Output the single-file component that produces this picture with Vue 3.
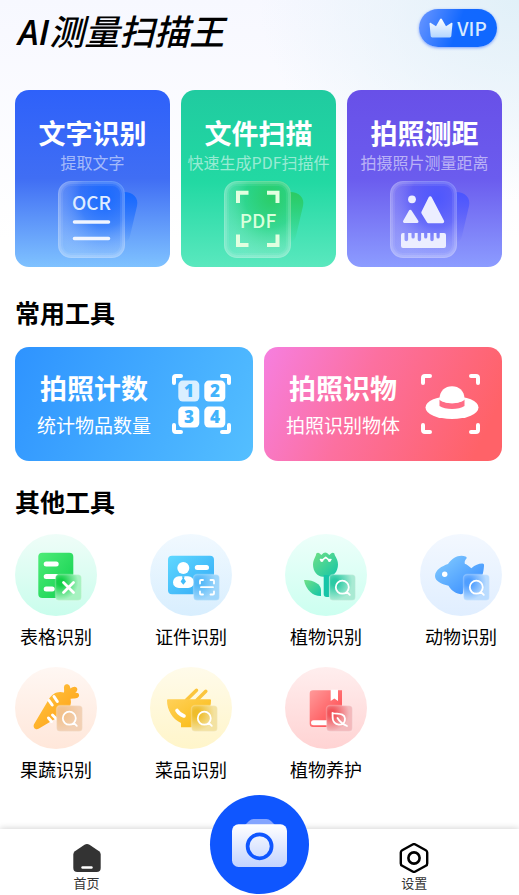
<template>
  <div class="page">
    <header class="header">
      <h1 class="logo"><span class="logo-en">AI</span>测量扫描王</h1>
      <button class="vip" type="button">
        <svg width="24" height="20" viewBox="0 0 24 20" aria-hidden="true">
          <defs>
            <linearGradient id="crown" x1="0" y1="0" x2="0" y2="1">
              <stop offset="0" stop-color="#ffffff" />
              <stop offset="1" stop-color="#b4d6ff" />
            </linearGradient>
          </defs>
          <path
            d="M.5 5.600c0-.8.8-1.100 1.400-.6L7 8.300 11 1.200c.5-.8 1.500-.8 2 0L17 8.300l5.100-3.300c.7-.5 1.400-.2 1.400.6l-1.200 12.400c-.1.9-.7 1.400-1.500 1.400H3.200c-.8 0-1.400-.5-1.500-1.400z"
            fill="url(#crown)"
          />
        </svg>
        <span class="vip-text">VIP</span>
      </button>
    </header>

    <main class="content">
      <!-- 主功能 -->
      <div class="features">
        <button
          v-for="item in features"
          :key="item.id"
          type="button"
          class="feature"
          :class="item.id"
        >
          <span class="card-title">{{ item.title }}</span>
          <span class="feature-desc">{{ item.desc }}</span>
          <svg class="feature-icon" width="94" height="77" viewBox="0 0 94 77" aria-hidden="true">
            <defs>
              <linearGradient :id="item.id + '-back'" x1="0" y1="0" x2="0" y2="1">
                <stop offset="0" :stop-color="item.back" />
                <stop offset="1" :stop-color="item.back" stop-opacity="0" />
              </linearGradient>
              <radialGradient :id="item.id + '-glass'" cx="0.7" cy="0.22" r="0.85">
                <stop offset="0" :stop-color="item.back" stop-opacity="0.9" />
                <stop offset="0.45" :stop-color="item.back" stop-opacity="0.4" />
                <stop offset="1" stop-color="#fff" stop-opacity="0.14" />
              </radialGradient>
            </defs>
            <path
              d="M78 11c9 0 15 6 13 14l-7 30c-1 4-3 6-6 7z"
              :fill="`url(#${item.id}-back)`"
            />
            <rect x="12" y="0" width="67" height="77" rx="13" :fill="`url(#${item.id}-glass)`" />
            <g fill="none" stroke="#fff">
              <rect x="12.500" y="0.500" width="66" height="76" rx="12.500" stroke-opacity="0.12" />
              <rect x="13.500" y="1.500" width="64" height="74" rx="11.500" stroke-opacity="0.12" stroke-width="3" />
              <rect x="14.500" y="2.500" width="62" height="72" rx="10.500" stroke-opacity="0.08" stroke-width="5" />
            </g>

            <g v-if="item.id === 'ocr'">
              <text class="glyph" x="45.500" y="29" fill="#deebff">OCR</text>
              <path d="M28.500 41h34M28.500 57.500h34" stroke="#f0f5ff" stroke-width="3.600" stroke-linecap="round" />
            </g>
            <g v-else-if="item.id === 'pdf'">
              <text class="glyph" x="46" y="47" fill="#d9ffdc">PDF</text>
              <path
                d="M26 22V11.800h10.500M55 11.800h10.500V22M26 53.500V64h10.500M55 64h10.500V53.500"
                fill="none"
                stroke="#e2ffe0"
                stroke-width="4"
              />
            </g>
            <g v-else fill="#eceeff" stroke="#eceeff" stroke-linejoin="round">
              <circle cx="34" cy="18.300" r="3.900" stroke="none" />
              <path d="M32.300 30.300 26.500 40.500H39z" stroke-width="3" />
              <path d="M52.200 17 45 31.500l5.500 9H64.500z" stroke-width="3.400" />
              <path
                d="M25 52h1.500v6.500a1.800 1.800 0 0 0 3.600 0V52h3.400v4a1.600 1.600 0 0 0 3.200 0v-4h3v6.500a1.700 1.700 0 0 0 3.400 0V52h3v4a1.600 1.600 0 0 0 3.200 0v-4h3v6.500a1.700 1.700 0 0 0 3.400 0V52h2.800v4a1.600 1.600 0 0 0 3.200 0v-4H66q2 0 2 2v11q0 2-2 2H25q-2 0-2-2V54q0-2 2-2z"
                stroke="none"
              />
            </g>
          </svg>
        </button>
      </div>

      <section class="common">
        <h2>常用工具</h2>
        <div class="common-list">
          <button type="button" class="common-card count">
            <span class="common-text">
              <span class="card-title">拍照计数</span>
              <span class="common-desc">统计物品数量</span>
            </span>
            <svg width="60" height="60" viewBox="0 0 60 60" aria-hidden="true">
              <path :d="corners" class="corner" />
              <g fill="#fff">
                <rect x="6.300" y="6.600" width="21" height="21" rx="4.500" opacity="0.8" />
                <rect x="32.300" y="6.600" width="21" height="21" rx="4.500" />
                <rect x="6.300" y="32.600" width="21" height="21" rx="4.500" />
                <rect x="32.300" y="32.600" width="21" height="21" rx="4.500" />
              </g>
              <g class="digit">
                <text x="17" y="23">1</text>
                <text x="43" y="23">2</text>
                <text x="17" y="49">3</text>
                <text x="43" y="49">4</text>
              </g>
            </svg>
          </button>
          <button type="button" class="common-card object">
            <span class="common-text">
              <span class="card-title">拍照识物</span>
              <span class="common-desc">拍照识别物体</span>
            </span>
            <svg width="60" height="60" viewBox="0 0 60 60" aria-hidden="true">
              <path :d="corners" class="corner" />
              <ellipse cx="31" cy="33.500" rx="26.500" ry="11.500" fill="#fff" />
              <path d="M18.500 25.500C23 30.500 39 30.500 43.500 25.500V32C38 36 24 36 18.500 32z" fill="#ff6d86" />
              <path d="M18.500 25C18.500 17 24 12.300 31 12.300S43.500 17 43.500 25C40 30.500 22 30.500 18.500 25z" fill="#fff" />
            </svg>
          </button>
        </div>
      </section>

      <section class="others">
        <h2>其他工具</h2>
        <div class="tools">
          <button v-for="tool in tools" :key="tool.id" type="button" class="tool">
            <svg width="82" height="82" viewBox="0 0 82 82" aria-hidden="true">
              <defs>
                <linearGradient :id="tool.id + '-bg'" x1="0" y1="0" x2="0" y2="1">
                  <stop offset="0" :stop-color="tool.bg[0]" />
                  <stop offset="1" :stop-color="tool.bg[1]" />
                </linearGradient>
                <linearGradient :id="tool.id + '-fg'" x1="0" y1="0" x2="1" y2="1">
                  <stop offset="0" :stop-color="tool.fg[0]" />
                  <stop offset="1" :stop-color="tool.fg[1]" />
                </linearGradient>
                <radialGradient :id="tool.id + '-badge'" cx="0.2" cy="0.3" r="0.85">
                  <stop offset="0.15" :stop-color="tool.badge[0]" />
                  <stop offset="0.8" :stop-color="tool.badge[1]" />
                </radialGradient>
              </defs>
              <circle cx="41" cy="41" r="41" :fill="`url(#${tool.id}-bg)`" />

              <g :fill="`url(#${tool.id}-fg)`">
                <g v-if="tool.id === 'table'">
                  <rect x="23.300" y="18.700" width="35" height="45.300" rx="4" />
                  <path d="M31.200 30h10M31.200 42.500h10M31.200 55h6" class="white" stroke-width="5" />
                </g>
                <g v-else-if="tool.id === 'card'">
                  <rect x="18" y="21.700" width="46" height="38.600" rx="4" />
                  <circle cx="33.300" cy="34" r="6" fill="#fff" />
                  <rect x="23" y="42.300" width="21" height="11.800" rx="5.900" fill="#fff" />
                  <path d="M32 42.300h2.600L34 44.500l2 3-2.700 3.300-2.700-3.300 2-3z" fill="#43bdf9" />
                  <path d="M47.300 33.500h9.200" class="white" stroke-width="5" />
                </g>
                <g v-else-if="tool.id === 'plant'">
                  <path d="M31 21c0-2 2-3 4-1.200l1.300 1.300 2.200-2q1.800-1.200 3.500 0l2.300 2 1.400-1.300c2-1.800 4-.8 4 1.200 2 3.500 3.300 6 3.300 9.500 0 7-4.500 12.200-10 12.200h-5c-5.500 0-10-5-10-12.200 0-3.500 1.500-6 3-9.500z" />
                  <path d="M38.700 41h5.600v22h-2.600c-2 0-3-1-3-3z" fill="#16c5a8" />
                  <path d="M19 46c9-.5 17 4 17 10v6c-8 .2-15-5.500-17-16z" />
                  <path d="m35.500 25.500 1.500.8 3.700-3 3.700 3 1.500-.8" class="white" stroke-width="1.600" />
                  <path d="M36.800 26.300h.1M44.400 26.300h.1" class="white" stroke-width="3.200" />
                </g>
                <g v-else-if="tool.id === 'animal'">
                  <path d="M15 42c0-6 7-10 13-12 4-6 11-10 17.500-7.600 1.500.5 1.500 1.600.5 2.700-1.200 1.500-1.500 3-1.200 4.700 2.500 1 4.700 2.700 6.500 4.400 4-3.200 7-4.500 11-4.600 1.600 0 1.900.9 1.700 2.300-.5 7-2 13-7 19L44 53l-1 6c-.5 1.200-1.500 1.400-3 1-6.500-1.500-9-4.500-11.500-8.300C21 50 15 47 15 42z" />
                  <circle cx="24.700" cy="40.300" r="2.700" fill="#fff" />
                </g>
                <g v-else-if="tool.id === 'fruit'">
                  <path d="M34 32c3-5.500 9-8.500 15-6.500.5-3-.5-4.500.2-6.500.8-2.400 4.500-2.400 5.500 0l.8 2.500c2-1.700 4.500-2.500 6-1 1.700 1.700.6 4-1.300 5.400 2.300-.3 3.900.5 3.900 2.400 0 2.300-2.800 3.400-5.500 3.200l-3 .3c1 4.700-.2 9-4 13.200L24 61.600c-3 2-6.500-.7-5-4.300z" />
                  <path d="m34 33.500 3.200 4.500M39 29.500l3.300 5M33.500 51l3 3.500M37.500 48l4 4" class="white" stroke-width="3" />
                </g>
                <g v-else-if="tool.id === 'dish'">
                  <path d="m36.500 33 10-9.700M47 33l8.800-8.700" stroke="#fbc53c" stroke-width="3.500" stroke-linecap="round" />
                  <path d="M18 32.300h42q1 0 1 1c0 9-4 17-11 22v5H31V56c-8.500-4-14-13-14-22.500q0-1.200 1-1.200z" />
                  <path d="M27 43.500q2.500 4 7 5.500" class="white" stroke-width="3.600" />
                </g>
                <g v-else>
                  <path d="M28 23.300h29V60H28q-3.300 0-3.300-3.300V26.600q0-3.300 3.300-3.300z" />
                  <path d="M57 53.300H28.500a2.500 2.500 0 0 0 0 5H57z" fill="#fff" />
                  <path d="M45.700 22.700H53V34l-3.700-2.600-3.600 2.600z" fill="#fff" />
                </g>
              </g>

              <rect
                :x="tool.pos[0]"
                :y="tool.pos[1]"
                width="26"
                height="26"
                rx="3.500"
                :fill="`url(#${tool.id}-badge)`"
                stroke="#fff"
                stroke-opacity="0.22"
                stroke-width="1.400"
              />
              <path
                :d="marks[tool.mark].d"
                :transform="`translate(${tool.pos[0]} ${tool.pos[1]})`"
                class="white"
                :stroke-width="marks[tool.mark].width"
              />
            </svg>
            <span class="tool-name">{{ tool.name }}</span>
          </button>
        </div>
      </section>
    </main>

    <!-- 底部导航 -->
    <nav class="tabbar">
      <a class="tab" href="#home">
        <svg width="30" height="30" viewBox="0 0 30 30" aria-hidden="true">
          <path
            d="M12.500 1.800q2.500-1.600 5 0l9.600 6.500q1.600 1.200 1.600 3.200V25q0 4-4 4H5.300q-4 0-4-4V11.500q0-2 1.600-3.200z"
            fill="#333"
          />
          <path d="M10.500 24.500h9" stroke="#fff" stroke-width="2.400" stroke-linecap="round" />
        </svg>
        <span>首页</span>
      </a>
      <button class="camera" type="button" aria-label="拍照">
        <svg width="55" height="48" viewBox="0 0 55 48" aria-hidden="true">
          <defs>
            <linearGradient id="camera-body" x1="0" y1="0" x2="0" y2="1">
              <stop offset="0" stop-color="#ffffff" />
              <stop offset="1" stop-color="#c2d3ff" />
            </linearGradient>
          </defs>
          <path d="m13 6 4-4q2-2 4.500-2h13Q37 0 39 2l4 4z" fill="#83a4ff" />
          <rect y="5.300" width="55" height="42.700" rx="6.500" fill="url(#camera-body)" />
          <circle cx="27.600" cy="27.300" r="12" fill="none" stroke="#0f56ff" stroke-width="3.700" />
        </svg>
      </button>
      <a class="tab" href="#settings">
        <svg width="30" height="30" viewBox="0 0 30 30" fill="none" stroke="#000" aria-hidden="true">
          <path
            d="M13.600 1.500q1.400-.8 2.800 0l10.400 5.700q1.400.8 1.400 2.400v10.800q0 1.600-1.400 2.400l-10.400 5.700q-1.400.8-2.800 0L3.200 22.800q-1.400-.8-1.400-2.400V9.600q0-1.600 1.400-2.400z"
            stroke-width="2.400"
          />
          <circle cx="15" cy="15" r="5.600" stroke-width="2.600" />
        </svg>
        <span>设置</span>
      </a>
    </nav>
  </div>
</template>

<script setup>
const features = [
  { id: 'ocr', title: '文字识别', desc: '提取文字', back: '#1468ff' },
  { id: 'pdf', title: '文件扫描', desc: '快速生成PDF扫描件', back: '#2bcb62' },
  { id: 'distance', title: '拍照测距', desc: '拍摄照片测量距离', back: '#4a55ff' },
]

const tools = [
  { id: 'table', name: '表格识别', mark: 'cross', pos: [40.5, 40.5], bg: ['#effdf8', '#c9fdec'], fg: ['#4eec78', '#10cf4e'], badge: ['#14d048', '#a6f2c0'] },
  { id: 'card', name: '证件识别', mark: 'scan', pos: [43.5, 40.5], bg: ['#f1f9ff', '#d8eefe'], fg: ['#5fd8ff', '#33a9f6'], badge: ['#55b9f8', '#9fd6fb'] },
  { id: 'plant', name: '植物识别', mark: 'search', pos: [44.5, 40.5], bg: ['#edfffa', '#ccfff0'], fg: ['#71e086', '#13c5a8'], badge: ['#2ccaa4', '#a8ead3'] },
  { id: 'animal', name: '动物识别', mark: 'search', pos: [43.5, 40.5], bg: ['#f3f8ff', '#e0eeff'], fg: ['#86ceff', '#3187ff'], badge: ['#4f9eff', '#badcff'] },
  { id: 'fruit', name: '果蔬识别', mark: 'search', pos: [41.5, 38.5], bg: ['#fff7f3', '#ffe7da'], fg: ['#ffca4a', '#ff9a0c'], badge: ['#f2c28d', '#f2d0b4'] },
  { id: 'dish', name: '菜品识别', mark: 'search', pos: [41.5, 38.5], bg: ['#fffbea', '#fff5ca'], fg: ['#ffd15a', '#f9b90d'], badge: ['#efbd2b', '#f3e2a2'] },
  { id: 'care', name: '植物养护', mark: 'leaf', pos: [41.5, 38.5], bg: ['#ffeeee', '#ffd3d3'], fg: ['#ff9a9a', '#ff3f45'], badge: ['#f1545a', '#f3b9bc'] },
]

const marks = {
  cross: { d: 'm8 8 10 10M18 8 8 18', width: 2.8 },
  scan: { d: 'M6.500 9V6.500Q6.500 5.500 7.500 5.500H9.500M17 5.500h2.500q1 0 1 1V9M6.500 17v2q0 1 1 1h2M17 20h2.500q1 0 1-1v-2M7.500 12.700h12', width: 1.8 },
  search: { d: 'M19.300 12.700a6.500 6.500 0 1 1-13 0a6.500 6.500 0 1 1 13 0M17.300 17.300l3 3', width: 1.8 },
  leaf: { d: 'M6 7.500C10 9 18 7 18.500 13c.2 2-.5 3.700-1.500 5-3 1.700-7 1.500-9-.8C5 14 6.500 10.500 6 7.500zM11 12.500c2 3.500 5 6 9.500 8', width: 1.8 },
}

// 四角取景框
const corners = 'M2 9V4Q2 2 4 2H9M50 2h5q2 0 2 2v5M2 51v5q0 2 2 2h5M50 58h5q2 0 2-2v-5'
</script>

<style>
body {
  margin: 0;
  background: #fff;
}
</style>

<style scoped>
.page {
  display: flex;
  flex-direction: column;
  min-height: 100vh;
  font-family: "Noto Sans CJK SC", sans-serif;
  color: #000;
  background:
    radial-gradient(ellipse 260px 200px at 100% 0, #e1f0f8, rgba(225, 240, 248, 0)),
    linear-gradient(#f7f8ff, #fff 240px);
}

button {
  padding: 0;
  border: 0;
  background: none;
  font-family: inherit;
  color: inherit;
  cursor: pointer;
}

svg {
  display: block;
  flex: none;
}

.header {
  display: flex;
  align-items: center;
  justify-content: space-between;
  padding: 9px 22px 43px 18px;
}

.logo {
  margin: 4px 0 0;
  font-size: 35px;
  line-height: 34px;
  font-style: italic;
  font-weight: 500;
}

.logo-en {
  font-family: "Open Sans", "Noto Sans CJK SC", sans-serif;
  font-weight: 600;
  line-height: 0;
}

.vip {
  display: flex;
  align-items: center;
  justify-content: center;
  gap: 4px;
  width: 78px;
  height: 38px;
  border-radius: 19px;
  background: linear-gradient(110deg, #6b97ff, #1268ff 50%, #0f68ff);
  box-shadow: 0 1px 3px rgba(20, 80, 255, 0.5);
}

.vip-text {
  font-size: 19px;
  line-height: 24px;
  font-weight: 500;
  color: #d8eaff;
}

.content {
  padding: 0 17px 24px 15px;
}

.features {
  display: grid;
  grid-template-columns: repeat(3, 1fr);
  gap: 11px;
}

.feature {
  display: flex;
  flex-direction: column;
  align-items: center;
  padding: 27px 0 9px;
  border-radius: 14px;
  white-space: nowrap;
}

.ocr {
  background: linear-gradient(#2e61fa, #406ef4 50%, #7fc2ff);
}

.pdf {
  background: linear-gradient(#20cba0, #22d9a3 52%, #5ae8be);
}

.distance {
  background: linear-gradient(#6850e8, #6b5cee 50%, #8c9cff);
}

.card-title {
  font-size: 27px;
  line-height: 32px;
  font-weight: 700;
  color: #fff;
}

.feature-desc {
  margin-top: 2px;
  font-size: 16px;
  line-height: 22px;
  color: rgba(255, 255, 255, 0.55);
}

.feature-icon {
  margin-top: 8px;
}

.glyph {
  font-size: 19px;
  font-weight: 500;
  text-anchor: middle;
}

h2 {
  margin: 0;
  font-size: 25px;
  line-height: 32px;
  font-weight: 700;
}

.common {
  margin-top: 29px;
}

.common-list {
  display: grid;
  grid-template-columns: repeat(2, 1fr);
  gap: 11px;
  margin-top: 19px;
}

.common-card {
  display: flex;
  align-items: center;
  justify-content: space-between;
  height: 114px;
  padding: 0 21px 0 22px;
  border-radius: 14px;
  color: #fff;
  white-space: nowrap;
}

.common-text {
  display: flex;
  flex-direction: column;
  align-items: center;
  gap: 8px;
  padding-top: 2px;
}

.common-desc {
  font-size: 19px;
  line-height: 26px;
}

.count {
  background: linear-gradient(115deg, #2e93ff, #54bfff);
}

.object {
  background: linear-gradient(115deg, #f67fe0, #fc70a0 40%, #ff6268 90%);
}

.corner {
  fill: none;
  stroke: #fff;
  stroke-width: 4;
  stroke-linecap: round;
}

.digit {
  font-family: "Open Sans", "Noto Sans", sans-serif;
  font-size: 17px;
  font-weight: 800;
  text-anchor: middle;
  fill: #42b3fb;
}

.others {
  margin-top: 24px;
}

.tools {
  display: grid;
  grid-template-columns: repeat(4, 82px);
  justify-content: space-between;
  row-gap: 19px;
  margin-top: 17px;
}

.tool {
  display: flex;
  flex-direction: column;
  align-items: center;
  gap: 8px;
}

.tool-name {
  font-size: 18px;
  line-height: 24px;
  white-space: nowrap;
}

.white {
  fill: none;
  stroke: #fff;
  stroke-linecap: round;
  stroke-linejoin: round;
}

.tabbar {
  position: sticky;
  bottom: 0;
  display: grid;
  grid-template-columns: 33fr 33fr 26fr 7fr;
  grid-template-rows: 66px;
  align-items: end;
  justify-items: center;
  margin-top: auto;
  background: #fff;
  box-shadow: 0 -1px 6px rgba(0, 0, 0, 0.16);
}

.tab {
  display: flex;
  flex-direction: column;
  align-items: center;
  padding-bottom: 2px;
  font-size: 13px;
  line-height: 20px;
  color: #333;
  text-decoration: none;
}

.camera {
  display: flex;
  align-items: center;
  justify-content: center;
  width: 99px;
  height: 99px;
  margin-bottom: 1px;
  border-radius: 50%;
  background: #0f56ff;
}

.camera svg {
  margin-bottom: 4px;
}
</style>
